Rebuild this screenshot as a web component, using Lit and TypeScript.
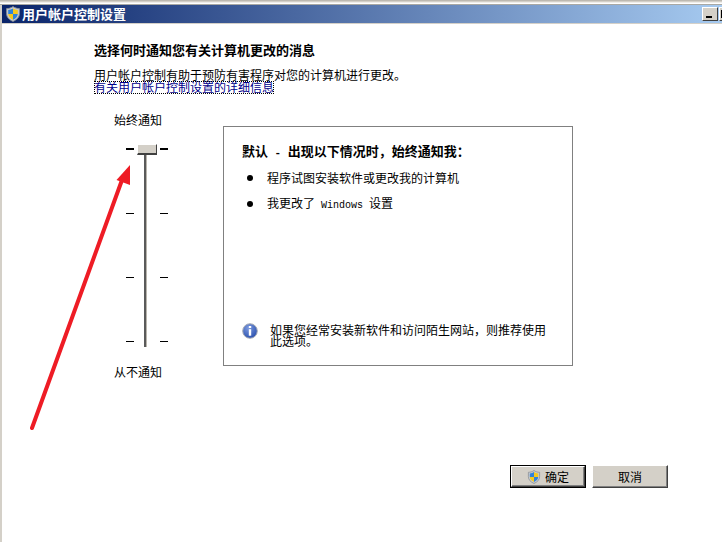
import { LitElement, html, css, svg } from "lit";
import { customElement } from "lit/decorators.js";

const shield = (size: number) => html`<svg class="shield" width=${size} height=${size} viewBox="0 0 16 16">
  <path d="M8 .6C6 2 3.8 2.600 1.600 2.600v5c0 3.600 2.600 6.200 6.400 7.800 3.800-1.600 6.400-4.200 6.400-7.800v-5C12.200 2.600 10 2 8 .6z" fill="#c9ccd0" stroke="#8a8f96" stroke-width=".9"/>
  <path d="M8 2.400C6.700 3.200 5 3.800 3.200 3.900V8H8z" fill="#2f82dc"/>
  <path d="M8 2.400c1.300.8 3 1.400 4.800 1.500V8H8z" fill="#f5c91d"/>
  <path d="M3.200 8c.2 2.700 2.200 4.500 4.800 5.700V8z" fill="#f5c91d"/>
  <path d="M12.800 8c-.2 2.700-2.200 4.500-4.800 5.700V8z" fill="#2f82dc"/>
</svg>`;

const arrow = svg`<path d="M32 428 L122 180" stroke="#ee1c25" stroke-width="4" stroke-linecap="round" fill="none"/><path d="M130 165 L116.500 180 L130 185z" fill="#ee1c25"/>`;

@customElement("app-root")
export class AppRoot extends LitElement {
  static styles = css`
    :host { display: block; width: 722px; height: 542px; position: relative; overflow: hidden; background: #fff;
      font-family: "Noto Sans CJK SC", "Liberation Sans", sans-serif; font-size: 12px; color: #000; line-height: 12px; }
    .frame { display: flex; flex-direction: column; height: 100%; }
    .top { height: 5px; flex: none; background: linear-gradient(#bdb9b1 0 1px, #d4d0c8 1px 2px, #efedea 2px 3px, #ffffff 3px 4px, #a9a8a3 4px 5px); }
    .body { flex: 1; display: flex; min-height: 0; }
    .edge { width: 2px; flex: none; background: #d4d0c8; }
    .main { flex: 1; min-width: 0; display: flex; flex-direction: column; }
    .title { height: 18px; flex: none; display: flex; align-items: center; gap: 1px; padding-left: 3px; color: #fff; font-weight: 700;
      background: linear-gradient(90deg, #0a246a, #a6caf0); font-size: 13px; position: relative; }
    .sep { height: 1px; flex: none; background: #d4d0c8; }
    .winbtn { position: absolute; right: -13px; top: 2px; display: flex; gap: 1px; }
    .wb { width: 16px; height: 14px; box-sizing: border-box; background: #d4d0c8; border: 1px solid; border-color: #fff #404040 #404040 #fff; position: relative; }
    .wb i { position: absolute; left: 3px; bottom: 2px; width: 6px; height: 2px; background: #000; }
    .wb u { position: absolute; left: 1px; top: 2px; width: 8px; height: 8px; box-sizing: border-box; border: 1px solid #000; border-top-width: 2px; }
    .content { flex: 1; position: relative; display: flex; flex-direction: column; padding: 20px 0 0 92px; }
    .h1 { font-weight: 700; height: 12px; font-size: 13px; }
    .desc { margin-top: 13px; height: 12px; line-height: 12px; }
    .link { color: #00008b; height: 13px; line-height: 12px; width: fit-content; outline: 1px dotted #000; outline-offset: -1px; }
    .row { display: flex; margin-top: 20px; }
    .sliderCol { width: 109px; display: flex; flex-direction: column; margin-left: 20px; }
    .lab { height: 12px; }
    .slider { height: 228px; margin-top: 12px; position: relative; margin-left: 12px; width: 42px; }
    .ticks { position: absolute; inset: 10px 0 auto 0; height: 194px; display: flex; flex-direction: column; justify-content: space-between; }
    .tickrow { display: flex; justify-content: space-between; height: 1px; }
    .tickrow.first { height: 2px; }
    .tickrow i { width: 8px; background: #000; display: block; }
    .track { position: absolute; left: 18px; top: 16px; width: 3px; height: 193px; box-sizing: border-box;
      background: linear-gradient(90deg, #5a5a5a 0 2px, #b8b4ac 2px 3px); }
    .thumb { position: absolute; left: 11px; top: 6px; width: 20px; height: 11px; box-sizing: border-box; background: #d4d0c8;
      border-right: 1px solid #404040; border-bottom: 2px solid #404040; border-top: 1px solid #fff; border-left: 1px solid #fff; }
    .panel { width: 350px; height: 240px; box-sizing: border-box; border: 1px solid #808080; margin-top: 12px; padding: 18px 0 0 18px; display: flex; flex-direction: column; position: relative; }
    .panel h2 { margin: 0; font: inherit; font-size: 13px; font-weight: 700; height: 12px; }
    .dash { font-family: "Liberation Mono", monospace; font-size: 11px; font-weight: 700; white-space: pre; }
    ul { list-style: none; margin: 15px 0 0; padding: 0; display: flex; flex-direction: column; gap: 14px; }
    li { display: flex; height: 12px; align-items: center; }
    li b { width: 6px; height: 6px; border-radius: 50%; background: #000; margin: 0 14px 0 5px; flex: none; }
    .win { font-family: "Liberation Mono", monospace; font-size: 10px; white-space: pre; }
    .info { position: absolute; left: 18px; top: 196px; display: flex; gap: 12px; }
    .info svg { flex: none; }
    .info p { margin: 0; width: 278px; line-height: 11px; padding-top: 1px; }
    .actions { position: absolute; left: 506px; top: 441px; display: flex; gap: 7px; }
    .btn { height: 23px; box-sizing: border-box; background: #d4d0c8; display: flex; align-items: center; justify-content: center; gap: 4px; width: 76px;
      border: 1px solid; border-color: #fff #404040 #404040 #fff; box-shadow: inset -1px -1px 0 #808080; }
    .btn.def { outline: 1px solid #000; width: 74px; margin: 1px 0 1px 3px; height: 21px; box-shadow: inset -1px -1px 0 #808080, 1px 1px 0 #000; }
    .arrow { position: absolute; left: 0; top: 0; pointer-events: none; }
  `;

  render() {
    const ticks = [0, 1, 2, 3];
    return html`<div class="frame">
      <div class="top"></div>
      <div class="body">
        <div class="edge"></div>
        <div class="main">
          <div class="title">${shield(16)}<span>用户帐户控制设置</span>
            <div class="winbtn"><div class="wb"><i></i></div><div class="wb"><u></u></div></div>
          </div>
          <div class="sep"></div>
          <div class="content">
            <div class="h1">选择何时通知您有关计算机更改的消息</div>
            <div class="desc">用户帐户控制有助于预防有害程序对您的计算机进行更改。</div>
            <div class="link">有关用户帐户控制设置的详细信息</div>
            <div class="row">
              <div class="sliderCol">
                <div class="lab">始终通知</div>
                <div class="slider">
                  <div class="ticks">${ticks.map((t) => html`<div class="tickrow ${t === 0 ? "first" : ""}"><i></i><i></i></div>`)}</div>
                  <div class="track"></div>
                  <div class="thumb"></div>
                </div>
                <div class="lab">从不通知</div>
              </div>
              <div class="panel">
                <h2>默认<span class="dash"> - </span>出现以下情况时，始终通知我：</h2>
                <ul>
                  <li><b></b>程序试图安装软件或更改我的计算机</li>
                  <li><b></b><span>我更改了<span class="win"> Windows </span>设置</span></li>
                </ul>
                <div class="info">
                  <svg width="16" height="16" viewBox="0 0 16 16">
                    <defs><radialGradient id="g" cx=".4" cy=".3" r=".8"><stop offset="0" stop-color="#7d9be0"/><stop offset="1" stop-color="#2148a8"/></radialGradient></defs>
                    <circle cx="8" cy="8" r="7.300" fill="url(#g)" stroke="#a8acb4"/>
                    <rect x="6.800" y="3" width="2.400" height="2" fill="#fff"/>
                    <rect x="6.800" y="6.200" width="2.400" height="6.500" fill="#fff"/>
                  </svg>
                  <p>如果您经常安装新软件和访问陌生网站，则推荐使用此选项。</p>
                </div>
              </div>
            </div>
            <div class="actions">
              <div class="btn def">${shield(14)}<span>确定</span></div>
              <div class="btn">取消</div>
            </div>
          </div>
        </div>
      </div>
    </div>
    <svg class="arrow" width="722" height="542" viewBox="0 0 722 542">${arrow}</svg>`;
  }
}
